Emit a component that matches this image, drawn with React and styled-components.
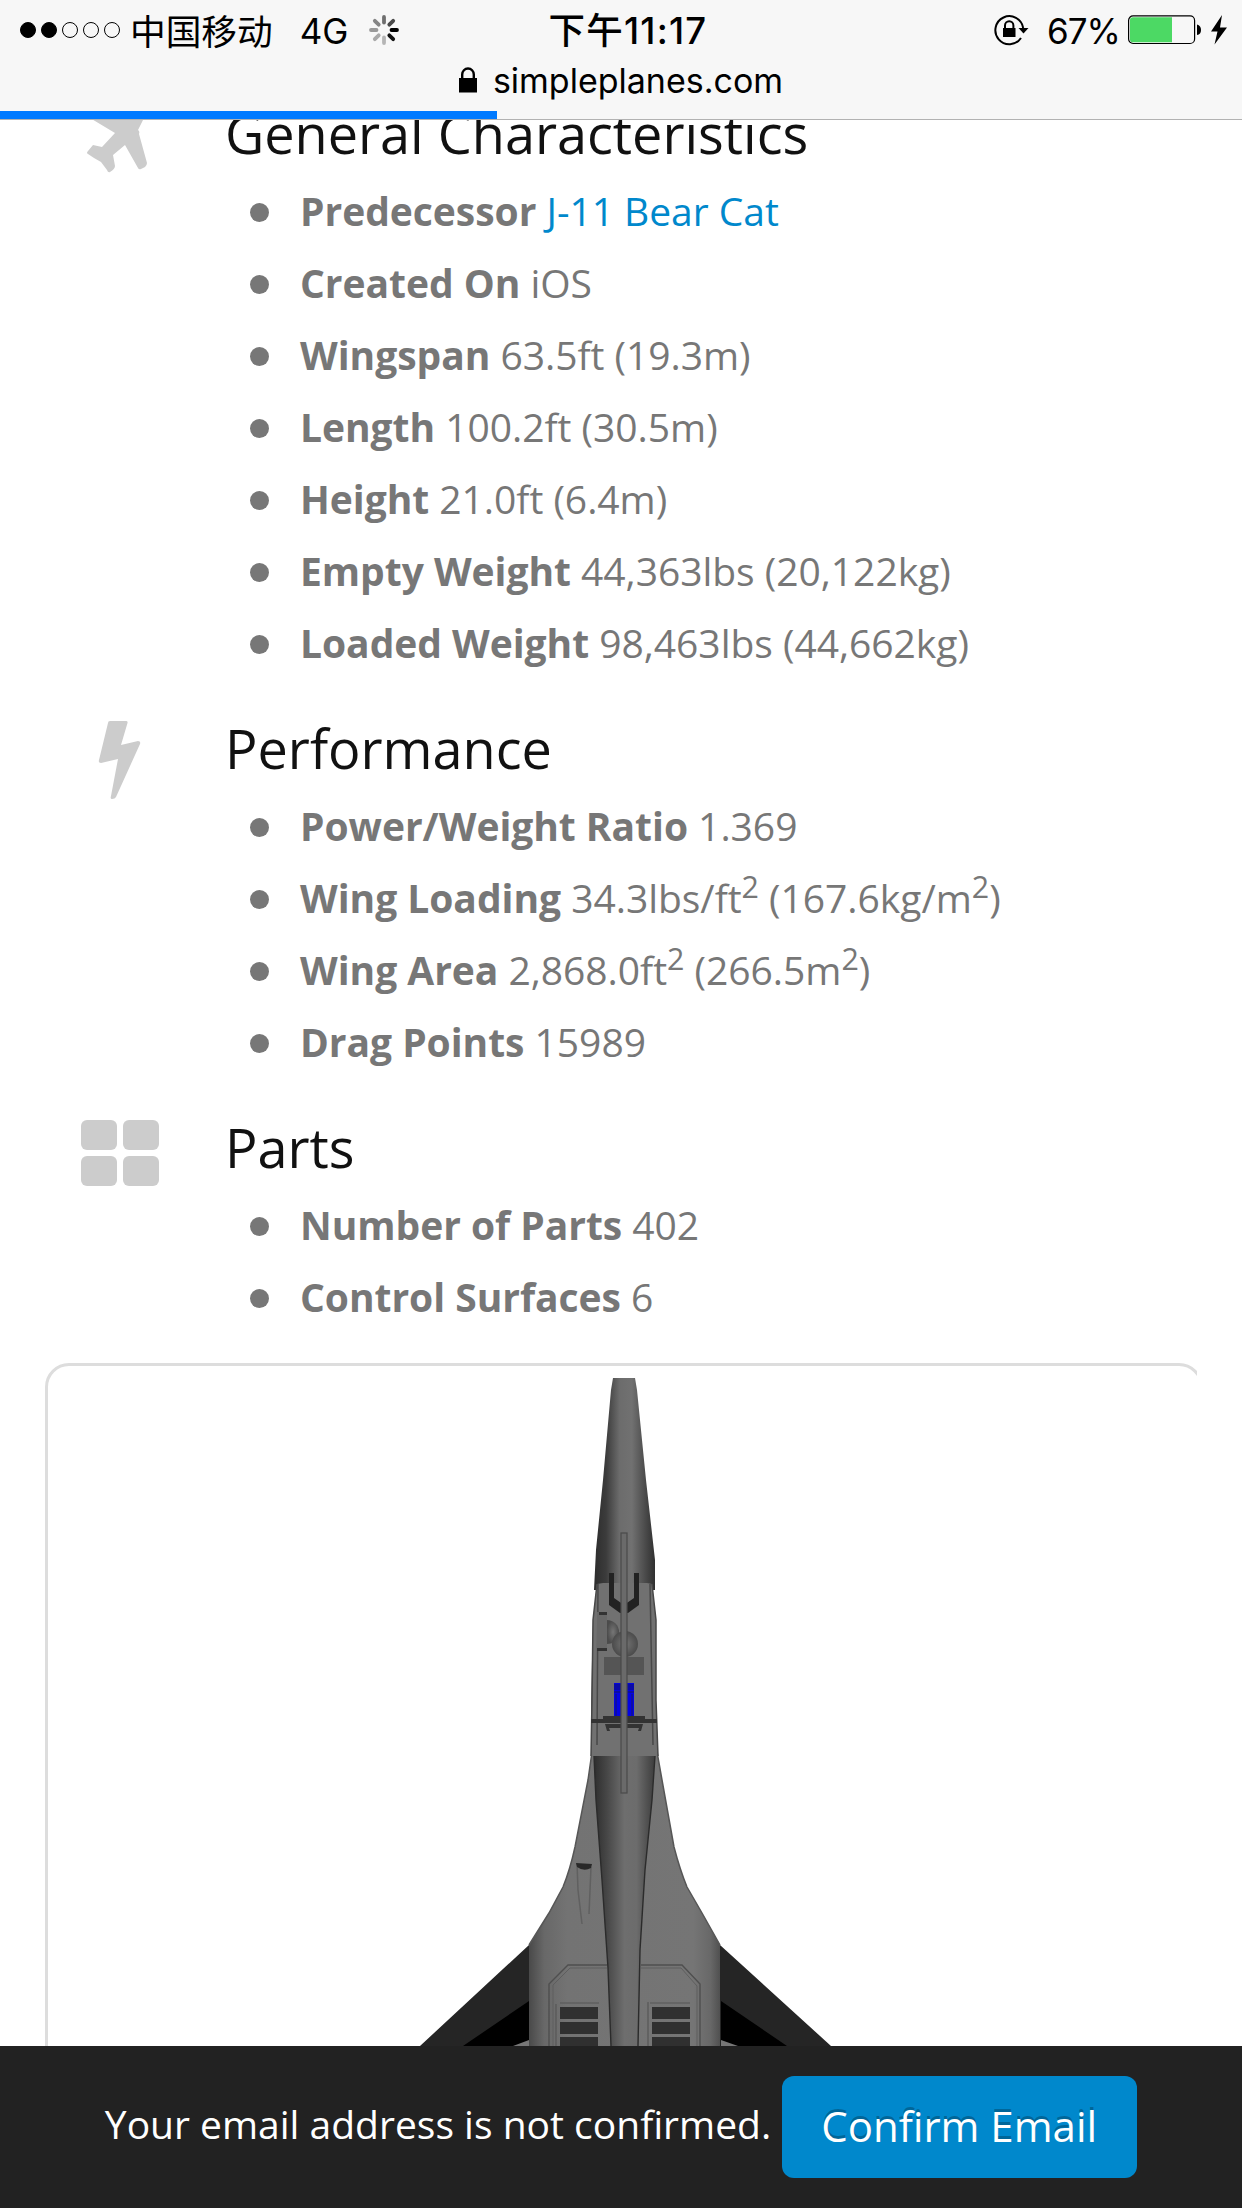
import React from "react";
import styled, { createGlobalStyle } from "styled-components";

const sections = [
  {
    title: "General Characteristics",
    icon: "plane",
    items: [
      { label: "Predecessor", link: "J-11 Bear Cat" },
      { label: "Created On", value: "iOS" },
      { label: "Wingspan", value: "63.5ft (19.3m)" },
      { label: "Length", value: "100.2ft (30.5m)" },
      { label: "Height", value: "21.0ft (6.4m)" },
      { label: "Empty Weight", value: "44,363lbs (20,122kg)" },
      { label: "Loaded Weight", value: "98,463lbs (44,662kg)" },
    ],
  },
  {
    title: "Performance",
    icon: "bolt",
    items: [
      { label: "Power/Weight Ratio", value: "1.369" },
      {
        label: "Wing Loading",
        value: (
          <>
            34.3lbs/ft<sup>2</sup> (167.6kg/m<sup>2</sup>)
          </>
        ),
      },
      {
        label: "Wing Area",
        value: (
          <>
            2,868.0ft<sup>2</sup> (266.5m<sup>2</sup>)
          </>
        ),
      },
      { label: "Drag Points", value: "15989" },
    ],
  },
  {
    title: "Parts",
    icon: "grid",
    items: [
      { label: "Number of Parts", value: "402" },
      { label: "Control Surfaces", value: "6" },
    ],
  },
];

const spokes = ["#6f6f6f", "#4a4a4a", "#000", "#111", "#b5b5b5", "#a9a9a9", "#999", "#858585"];

const Spinner = () => (
  <svg width="30" height="32" viewBox="-15 -16 30 32">
    {spokes.map((color, i) => (
      <line
        key={i}
        x1="0"
        y1="-7.5"
        x2="0"
        y2="-13"
        stroke={color}
        strokeWidth="3.8"
        strokeLinecap="round"
        transform={`rotate(${i * 45})`}
      />
    ))}
  </svg>
);

const RotationLock = () => (
  <svg width="36" height="32" viewBox="0 0 36 32">
    <path d="M27 24A14 14 0 1 1 29.2 14" fill="none" stroke="#000" strokeWidth="2" />
    <path d="M24.5 14H34.5L29.5 19.5Z" />
    <rect x="9" y="14" width="12.5" height="9" />
    <path d="M11 14.5V11.5A4.2 4.2 0 0 1 19.4 11.5V14.5" fill="none" stroke="#000" strokeWidth="2" />
  </svg>
);

const Padlock = () => (
  <svg width="18" height="26" viewBox="0 0 18 26">
    <rect y="11" width="18" height="14.5" />
    <path d="M3.2 12V7.5A5.8 6 0 0 1 14.8 7.5V12" fill="none" stroke="#000" strokeWidth="2.4" />
  </svg>
);

const Battery = () => (
  <svg width="74" height="30" viewBox="0 0 74 30">
    <rect x="0.6" y="0.9" width="66" height="27.6" rx="4.5" fill="none" stroke="#000" strokeWidth="1.2" />
    <path d="M2 5Q2 2.2 5 2.2H44V27.2H5Q2 27.2 2 24.4Z" fill="#4cd964" />
    <path d="M69 9.5Q73 10.5 73 15T69 20Z" />
  </svg>
);

const Charge = () => (
  <svg width="18" height="30" viewBox="0 0 18 30">
    <path d="M12 0L1 16.5H7.5L4.5 29.5L17 12.5H10Z" />
  </svg>
);

const icons = {
  plane: (
    <svg width="64" height="76" viewBox="0 0 64 76">
      <path d="M64 0L51 26Q53 27 52 30L60 59Q60 61 58 63L54 65Q52 66 51 64L38 41L26 51L28 62Q28 65 23 68Q21 69 20 66L14 58L7 54L1 50Q-1 49 1 47L6 41L15 43L28 29L3 14L0 0Z" />
    </svg>
  ),
  bolt: (
    <svg width="44" height="80" viewBox="0 0 44 80">
      <path d="M12 0H28Q30 0 29.5 2L23 24L40 20Q43 20 42 23L18 76Q17 78 14 78Q12 78 13 75L20 38L3 42Q0 42 1 39L10 2Q10 0 12 0Z" />
    </svg>
  ),
  grid: (
    <svg width="78" height="66" viewBox="0 0 78 66">
      <rect width="36" height="30" rx="6" />
      <rect x="42" width="36" height="30" rx="6" />
      <rect y="36" width="36" height="30" rx="6" />
      <rect x="42" y="36" width="36" height="30" rx="6" />
    </svg>
  ),
};

const Jet = () => (
  <svg width="450" height="668" viewBox="400 1378 450 668">
    <defs>
      <linearGradient id="nose">
        <stop offset="0" stopColor="#2c2c2c" />
        <stop offset="0.2" stopColor="#3c3c3c" />
        <stop offset="0.42" stopColor="#6c6c6c" />
        <stop offset="0.62" stopColor="#717171" />
        <stop offset="0.85" stopColor="#494949" />
        <stop offset="1" stopColor="#303030" />
      </linearGradient>
      <linearGradient id="spine">
        <stop offset="0" stopColor="#2e2e2e" />
        <stop offset="0.22" stopColor="#484848" />
        <stop offset="0.5" stopColor="#6e6e6e" />
        <stop offset="0.7" stopColor="#6c6c6c" />
        <stop offset="1" stopColor="#3c3c3c" />
      </linearGradient>
      <linearGradient id="body">
        <stop offset="0" stopColor="#494949" />
        <stop offset="0.08" stopColor="#686868" />
        <stop offset="0.2" stopColor="#737373" />
        <stop offset="0.86" stopColor="#757575" />
        <stop offset="0.95" stopColor="#686868" />
        <stop offset="1" stopColor="#505050" />
      </linearGradient>
      <radialGradient id="ball">
        <stop offset="0" stopColor="#767676" />
        <stop offset="1" stopColor="#4b4b4b" />
      </radialGradient>
    </defs>

    {/* wings */}
    <path d="M529 1945L420 2046H530ZM720 1945L831 2046H718Z" fill="#252525" />
    <path d="M529 2001L463 2046H529ZM721 2001L787 2046H721Z" fill="#000" />
    <path d="M513 2046L529 2040V2046ZM721 2040L738 2046H721Z" fill="#777" />

    {/* fuselage */}
    <path
      d="M592 1752L588 1780L575 1847Q570 1870 563 1887L549 1913L529 1945V2046H720V1945L702 1913L687 1887Q680 1870 674 1847L662 1780L657 1752Z"
      fill="url(#body)"
    />
    <path d="M592 1752L588 1780L575 1847Q570 1870 563 1887L549 1913L529 1945M657 1752L662 1780L674 1847Q680 1870 687 1887L702 1913L720 1945" fill="none" stroke="#565656" strokeWidth="1.5" />
    <path d="M594 1754H655L652 1800L645 1870L640 1950L638 2046H611L608 1968L602 1880L596 1800Z" fill="url(#spine)" />
    <path d="M594 1756L596 1800L602 1880L608 1968L611 2046M655 1756L652 1800L645 1870L640 1950L638 2046" fill="none" stroke="#2b2b2b" strokeWidth="1.4" />
    <path d="M613 1378H635L637 1390L646 1480L655 1560V1590H594L596 1550L603 1480L611 1390Z" fill="url(#nose)" />

    {/* cockpit deck */}
    <path d="M597 1584L603 1583H647L652 1584L656 1620V1700L658 1756H591V1700L593 1620Z" fill="#717171" />
    <path d="M597 1584L593 1620L592 1700L591 1756M652 1584L656 1620V1700L658 1756M598 1584L597 1745M650 1584L653 1745" fill="none" stroke="#484848" strokeWidth="1.5" />
    <path d="M609 1573H614V1598L624 1605L634 1598V1573H639V1605L628 1613H620L609 1605Z" fill="#222" />
    <rect x="597" y="1612" width="10" height="36" fill="#686868" />
    <path d="M599 1612H607V1615H599ZM597 1648H607V1651H597Z" fill="#333" />
    <path d="M607 1620A12 12 0 0 1 607 1644Z" fill="url(#ball)" />
    <circle cx="625" cy="1644" r="13" fill="url(#ball)" />
    <rect x="604" y="1657" width="40" height="18" fill="#555" />
    <path d="M614 1683H634V1718H614Z" fill="#0404e4" />
    <path d="M614 1684H634V1690H614Z" fill="#0a0aa8" />
    <path d="M616 1694V1718M632 1694V1718M614 1692H634" stroke="#111190" strokeWidth="1.4" />
    <path d="M603 1716H645V1719H603ZM591 1719H657V1723H591ZM605 1724H643L641 1731H638L639 1728H609L610 1731H607Z" fill="#333" />
    <rect x="621" y="1533" width="6" height="260" fill="#6a6a6a" stroke="#4a4a4a" strokeWidth="1.2" />

    {/* nozzle on the left shoulder */}
    <path d="M577 1863L578 1890L582 1924M591 1867L589 1914" fill="none" stroke="#606060" strokeWidth="1.5" />
    <path d="M576 1863L592 1864L591 1868Q584 1872 577 1867Z" fill="#292929" />

    {/* intake panel */}
    <path d="M549 2046V1984L568 1965H607M641 1965H682L700 1984V2046" fill="none" stroke="#4f4f4f" strokeWidth="1.4" />
    <path d="M553 2046V1985L570 1968H607M641 1968H681L697 1986V2046" fill="none" stroke="#5e5e5e" strokeWidth="1" />
    <path d="M556 2046V2004M560 2003H599M650 2003H690M648 2002V2046" stroke="#575757" strokeWidth="1.2" />
    <path d="M560 2007H598V2019H560ZM560 2022H598V2034H560ZM560 2037H598V2046H560ZM652 2007H690V2019H652ZM652 2022H690V2034H652ZM652 2037H690V2046H652Z" fill="#303030" />
  </svg>
);

const App = () => {
  return (
    <Page>
      <GlobalStyle />
      <TopBar>
        <StatusRow>
          <StatusLeft>
            <Signal>
              <Dot $on />
              <Dot $on />
              <Dot />
              <Dot />
              <Dot />
            </Signal>
            <Carrier>中国移动</Carrier>
            <Network>4G</Network>
            <Spinner />
          </StatusLeft>
          <Time>下午11:17</Time>
          <StatusRight>
            <RotationLock />
            <Percent>67%</Percent>
            <Power>
              <Battery />
              <Charge />
            </Power>
          </StatusRight>
        </StatusRow>
        <Address>
          <Padlock />
          <span>simpleplanes.com</span>
        </Address>
        <Progress />
      </TopBar>

      <Viewport>
        <Content>
          {sections.map((section) => (
            <Section key={section.title}>
              <IconColumn $kind={section.icon}>{icons[section.icon]}</IconColumn>
              <div>
                <Title>{section.title}</Title>
                <List>
                  {section.items.map((item) => (
                    <Item key={item.label}>
                      <b>{item.label}</b> {item.link ? <a>{item.link}</a> : item.value}
                    </Item>
                  ))}
                </List>
              </div>
            </Section>
          ))}
          <PanelClip>
            <Panel>
              <Jet />
            </Panel>
          </PanelClip>
        </Content>
      </Viewport>

      <Notice>
        <Message>Your email address is not confirmed.</Message>
        <ConfirmButton>Confirm Email</ConfirmButton>
      </Notice>
    </Page>
  );
};

export default App;

const GlobalStyle = createGlobalStyle`
  * {
    box-sizing: border-box;
  }
  body {
    margin: 0;
    background: #fff;
  }
  svg {
    display: block;
    flex-shrink: 0;
  }
`;

const Page = styled.div`
  width: 1242px;
  height: 2208px;
  display: flex;
  flex-direction: column;
  overflow: hidden;
  background: #fff;
  font-family: "Open Sans", "Noto Sans CJK SC", sans-serif;
`;

const TopBar = styled.header`
  position: relative;
  flex: 0 0 120px;
  display: flex;
  flex-direction: column;
  background: #f7f7f7;
  border-bottom: 1px solid #b2b2b2;
  font-family: Inter, "Noto Sans CJK SC", sans-serif;
  color: #000;
`;

const StatusRow = styled.div`
  display: grid;
  grid-template-columns: 1fr auto 1fr;
  align-items: center;
  height: 60px;
  padding: 0 14px 0 20px;
  white-space: nowrap;
`;

const StatusLeft = styled.div`
  display: flex;
  align-items: center;
`;

const Signal = styled.div`
  display: flex;
  gap: 5px;
`;

const Dot = styled.i`
  width: 16px;
  height: 16px;
  border: 1px solid #000;
  border-radius: 50%;
  background: ${(props) => (props.$on ? "#000" : "transparent")};
`;

const Carrier = styled.span`
  margin: -2px 0 0 10px;
  font-size: 35.7px;
`;

const Network = styled.span`
  margin: 1px 21px 0 27px;
  font-size: 35px;
`;

const Time = styled.span`
  margin: -3px 0 0 8px;
  font-size: 36.5px;
  font-weight: 500;
  letter-spacing: 1.2px;
`;

const StatusRight = styled.div`
  display: flex;
  align-items: center;
  justify-content: flex-end;
`;

const Percent = styled.span`
  margin: 1px 8px 0 17px;
  font-size: 35px;
  letter-spacing: -1px;
`;

const Power = styled.div`
  display: flex;
  gap: 8px;
`;

const Address = styled.div`
  display: flex;
  align-items: center;
  justify-content: center;
  gap: 16px;
  height: 40px;
  font-size: 34px;
`;

const Progress = styled.div`
  position: absolute;
  left: 0;
  top: 111px;
  width: 497px;
  height: 8px;
  background: #007aff;
`;

const Viewport = styled.main`
  flex: 1;
  min-height: 0;
  overflow: hidden;
`;

/* the page is scrolled a little under the address bar */
const Content = styled.div`
  margin-top: -23px;
`;

const Section = styled.section`
  display: grid;
  grid-template-columns: 225px 1fr;
  margin-bottom: 33px;
`;

const iconPadding = {
  plane: "7px 0 0 87px",
  bolt: "9px 0 0 98px",
  grid: "9px 0 0 81px",
};

const IconColumn = styled.div`
  padding: ${(props) => iconPadding[props.$kind]};
  fill: #ccc;
`;

const Title = styled.h3`
  margin: 0 0 6px;
  font-size: 54px;
  font-weight: 400;
  line-height: 72px;
  color: #111;
`;

const List = styled.ul`
  margin: 0;
  padding: 0 0 0 75px;
  list-style: none;
`;

const Item = styled.li`
  display: block;
  height: 72px;
  font-size: 39px;
  line-height: 72px;
  letter-spacing: -0.03px;
  color: #777;
  white-space: nowrap;

  &::before {
    content: "";
    float: left;
    width: 19px;
    height: 19px;
    margin: 28px 0 0 -50px;
    border-radius: 50%;
    background: #777;
  }
  b {
    font-weight: 700;
  }
  a {
    color: #08c;
  }
  sup {
    font-size: 78%;
    line-height: 0;
    position: relative;
    top: -0.5em;
    vertical-align: baseline;
  }
`;

/* the panel is wider than its column, so the right edge is cut off */
const PanelClip = styled.div`
  width: 1152px;
  margin: -3px 0 0 45px;
  overflow: hidden;
`;

const Panel = styled.div`
  width: 1158px;
  height: 760px;
  padding: 12px 0 0 352px;
  border: 3px solid #ddd;
  border-radius: 24px;
`;

const Notice = styled.footer`
  flex: 0 0 162px;
  display: flex;
  align-items: center;
  justify-content: center;
  gap: 12px;
  background: #222;
  color: #fff;
  font-size: 39px;
  white-space: nowrap;
`;

const Message = styled.span`
  padding-bottom: 8px;
`;

const ConfirmButton = styled.button`
  width: 355px;
  height: 102px;
  margin-left: -1px;
  padding: 0 1px 4px 0;
  border: 0;
  border-radius: 12px;
  background: #08c;
  color: #fff;
  font-family: inherit;
  font-size: 42px;
  text-shadow: 0 -3px 0 rgba(0, 0, 0, 0.25);
`;
